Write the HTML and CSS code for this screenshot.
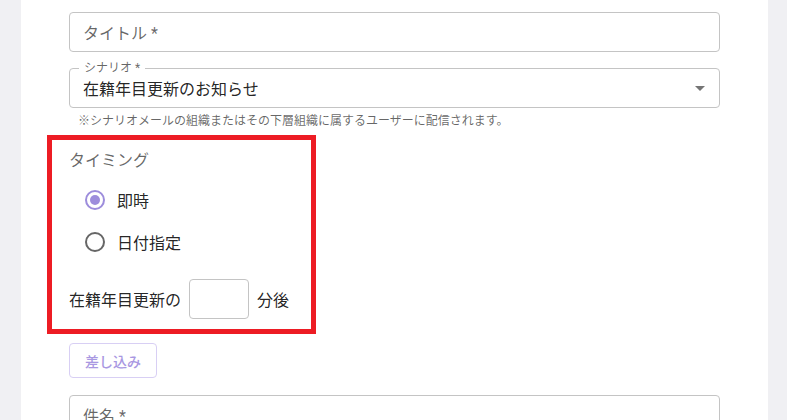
FILE: index.html
```html
<!DOCTYPE html>
<html lang="ja">
<head>
<meta charset="UTF-8">
<title>メール配信設定</title>
<link rel="stylesheet" href="styles.css">
</head>
<body>
<div class="panel">
  <div class="field">
    <span class="placeholder">タイトル *</span>
  </div>

  <div class="field select">
    <span class="float-label">シナリオ *</span>
    <span class="value">在籍年目更新のお知らせ</span>
    <svg class="arrow" viewBox="0 0 24 24" width="24" height="24"><path d="M7 10l5 5 5-5z"/></svg>
  </div>
  <p class="helper">※シナリオメールの組織またはその下層組織に属するユーザーに配信されます。</p>

  <div class="timing">
    <div class="legend">タイミング</div>
    <div class="radio-group">
      <label class="radio checked"><span class="dot"></span><span>即時</span></label>
      <label class="radio"><span class="dot"></span><span>日付指定</span></label>
    </div>
    <div class="minutes">
      <span>在籍年目更新の</span>
      <input class="min-input" type="text">
      <span>分後</span>
    </div>
  </div>

  <button class="insert-btn" disabled>差し込み</button>

  <div class="field">
    <span class="placeholder">件名 *</span>
  </div>
</div>
</body>
</html>
```

FILE: styles.css
```css
:root{
  --purple:#9d8ddc;
  --border:#c4c4c4;
  --text:rgba(0,0,0,0.87);
  --muted:rgba(0,0,0,0.6);
}
body{margin:0;background:#f0f0f3;font-family:Roboto,"Noto Sans CJK JP",sans-serif;color:var(--text);}
.panel{margin:0 19px 0 21px;min-height:460px;background:#fff;padding:12px 48px 0;display:flex;flex-direction:column;align-items:flex-start;}

.field{position:relative;box-sizing:border-box;width:100%;height:40px;border:1px solid var(--border);border-radius:4px;display:flex;align-items:center;padding:0 13px;font-size:16px;}
.field + .field{margin-top:16px;}
.placeholder{color:var(--muted);}
.float-label{position:absolute;left:9px;top:-9px;padding:0 5px;background:#fff;font-size:12px;line-height:16px;color:var(--muted);}
.value{color:var(--text);}
.arrow{position:absolute;right:7px;top:7px;fill:#757575;}
.helper{margin:3px 14px 0 9px;font-size:12px;line-height:20px;color:var(--muted);}

.timing{box-sizing:border-box;width:269px;margin:4px 0 0 -22px;border:5px solid #ed1c24;padding:9px 0 10px 17px;font-size:16px;}
.legend{line-height:24px;color:var(--muted);}
.radio-group{margin-top:6px;display:flex;flex-direction:column;}
.radio{display:flex;align-items:center;height:42px;cursor:pointer;}
.dot{box-sizing:border-box;width:20px;height:20px;margin:0 12px 0 16px;border:2px solid #666;border-radius:50%;position:relative;}
.radio.checked .dot{border-color:var(--purple);}
.radio.checked .dot::after{content:"";position:absolute;left:3px;top:3px;width:10px;height:10px;border-radius:50%;background:var(--purple);}
.minutes{margin-top:16px;display:flex;align-items:center;gap:8px;}
.min-input{box-sizing:border-box;width:60px;height:40px;border:1px solid var(--border);border-radius:4px;margin:0;}

.insert-btn{margin-top:9px;margin-bottom:17px;box-sizing:border-box;width:88px;height:35px;border:1px solid #d8cff4;border-radius:4px;background:#fff;color:#a998e2;font-family:inherit;font-size:14px;font-weight:500;padding:0;}
```
